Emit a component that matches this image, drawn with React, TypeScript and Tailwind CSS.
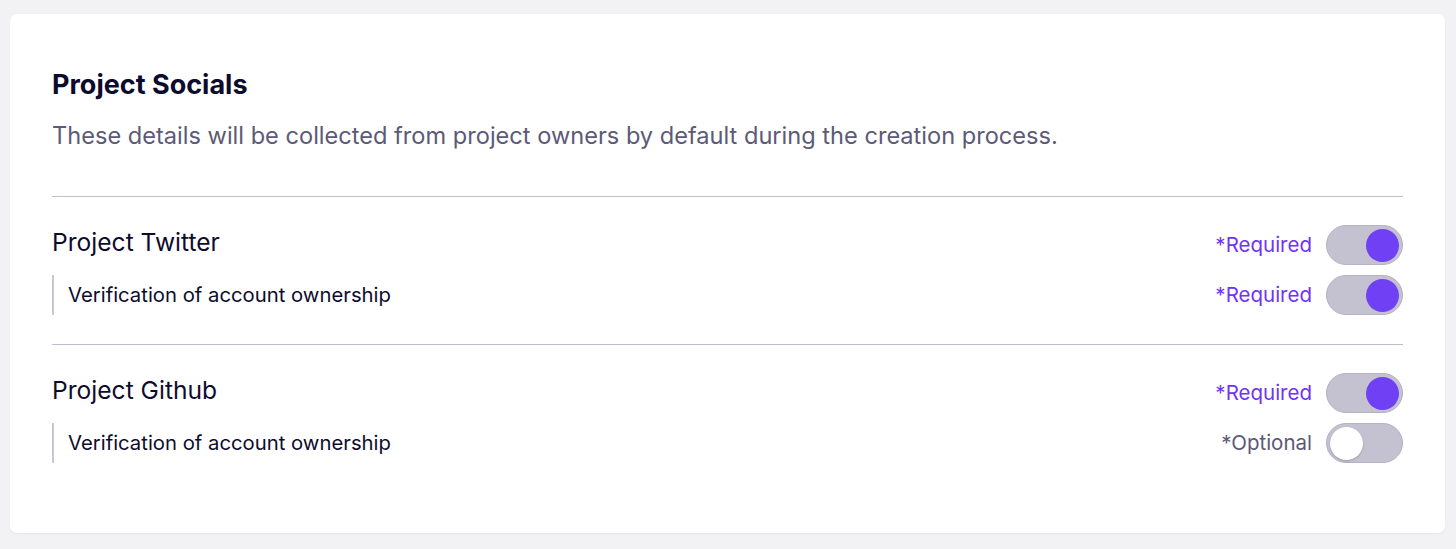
import React from "react";

type ToggleProps = { on: boolean };

function Toggle({ on }: ToggleProps) {
  return (
    <div
      className={`flex h-[40px] w-[77px] shrink-0 items-center rounded-full border border-[#b4b2c4] bg-[#c4c2d1] px-[3px] ${
        on ? "justify-end" : "justify-start"
      }`}
    >
      <div
        className={`h-[33px] w-[33px] rounded-full ${
          on ? "bg-[#6f40f4]" : "bg-white shadow-[0_1px_2px_rgba(0,0,0,0.2)]"
        }`}
      />
    </div>
  );
}

function Status({ required }: { required: boolean }) {
  return (
    <span
      className={`text-[20.5px] leading-[28px] ${
        required ? "text-[#7133f5]" : "text-[#5b5975]"
      }`}
    >
      {required ? "*Required" : "*Optional"}
    </span>
  );
}

type Social = {
  name: string;
  required: boolean;
  verifyRequired: boolean;
};

const socials: Social[] = [
  { name: "Project Twitter", required: true, verifyRequired: true },
  { name: "Project Github", required: true, verifyRequired: false },
];

export default function App() {
  return (
    <div
      className="min-h-screen bg-[#f2f2f4] pl-[10px] pr-[11px] pt-[14px]"
      style={{ fontFamily: "Inter, 'Noto Sans', sans-serif" }}
    >
      <div className="rounded-[7px] bg-white px-[42px] pb-[70px] pt-[56px] shadow-[0_1px_2px_rgba(0,0,0,0.06)]">
        <h2 className="text-[27px] font-bold leading-[30px] text-[#0e0c2d]">
          Project Socials
        </h2>
        <p className="mt-[22px] text-[23.6px] leading-[28px] text-[#5c5a77]">
          These details will be collected from project owners by default during
          the creation process.
        </p>

        {socials.map((s, i) => (
          <div
            key={s.name}
            className={`border-t border-[#bfbdd0] pt-[28px] ${
              i === 0 ? "mt-[46px]" : "mt-[29px]"
            }`}
          >
            <div className="flex h-[40px] items-center justify-between">
              <span className="mb-[6px] text-[24.6px] leading-[30px] text-[#0e0c2d]">
                {s.name}
              </span>
              <div className="flex items-center gap-[14px]">
                <Status required={s.required} />
                <Toggle on={s.required} />
              </div>
            </div>
            <div className="mt-[10px] flex h-[40px] items-center justify-between">
              <div className="flex h-[40px] items-center border-l-2 border-[#c9c7d6] pl-[14px]">
                <span className="text-[20.3px] leading-[28px] text-[#0e0c2d]">
                  Verification of account ownership
                </span>
              </div>
              <div className="flex items-center gap-[14px]">
                <Status required={s.verifyRequired} />
                <Toggle on={s.verifyRequired} />
              </div>
            </div>
          </div>
        ))}
      </div>
    </div>
  );
}
